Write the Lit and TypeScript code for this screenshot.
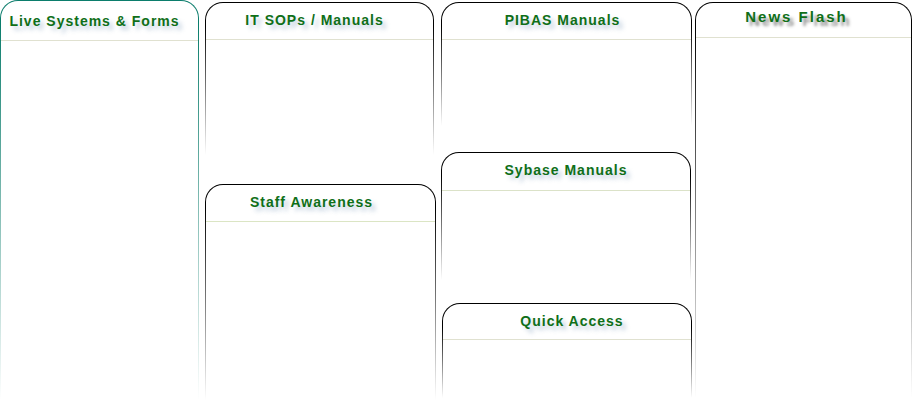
import { LitElement, html, css } from "lit";
import { customElement, property } from "lit/decorators.js";

@customElement("portal-panel")
export class PortalPanel extends LitElement {
  @property() heading = "";

  static styles = css`
    :host {
      display: block;
      --edge: #000;
      --rule: #e0e1d0;
      --shadow: 4px 4px 4px rgba(120, 150, 185, 0.45);
    }
    .panel {
      box-sizing: border-box;
      height: 100%;
      min-height: inherit;
      border: 1px solid transparent;
      border-bottom: 0;
      border-radius: 18px 18px 0 0;
      background:
        linear-gradient(#fff, #fff) padding-box,
        linear-gradient(var(--edge) 24px, #fff) border-box;
    }
    .title {
      box-sizing: border-box;
      height: var(--head, 37px);
      margin: 0;
      padding: 0 var(--pad-right, 8px) 0 var(--pad-left, 0px);
      border-bottom: 1px solid var(--rule);
      font-family: "Liberation Sans", Arial, sans-serif;
      font-size: var(--size, 14px);
      font-weight: 700;
      line-height: var(--line, 34px);
      letter-spacing: var(--tracking, 1px);
      text-align: center;
      white-space: nowrap;
      color: #0f6f18;
      text-shadow: var(--shadow);
    }
  `;

  render() {
    return html`<section class="panel">
      <h2 class="title">${this.heading}</h2>
      <slot></slot>
    </section>`;
  }
}

@customElement("app-root")
export class AppRoot extends LitElement {
  static styles = css`
    :host {
      display: block;
      background: #fff;
    }
    .board {
      display: grid;
      grid-template-columns:
        minmax(0, 202fr) minmax(0, 233fr) minmax(0, 251fr) minmax(0, 217fr);
      column-gap: 3px;
    }
    .column {
      display: flex;
      flex-direction: column;
      padding-top: 2px;
    }
    .column.first {
      padding: 0 3px 0 0;
    }
    .live {
      --edge: #0b7d6c;
      --head: 40px;
      --line: 40px;
      --pad-right: 10px;
      min-height: 400px;
    }
    .sops {
      --pad-right: 10px;
      min-height: 153px;
      margin: 0 4px 29px 0;
    }
    .staff {
      --rule: #dbe5c4;
      --pad-right: 18px;
      min-height: 216px;
      margin-right: 2px;
    }
    .pibas {
      min-height: 124px;
      margin-bottom: 26px;
    }
    .sybase {
      --rule: #dbe2c8;
      --head: 38px;
      --pad-right: 0px;
      min-height: 128px;
      margin: 0 1px 23px 0;
    }
    .quick {
      --head: 36px;
      --pad-right: 0px;
      --pad-left: 10px;
      min-height: 95px;
      margin-left: 1px;
    }
    .news {
      --shadow: 4px 4px 3px rgba(40, 40, 40, 0.5);
      --head: 35px;
      --line: 28px;
      --size: 15px;
      --tracking: 2px;
      --pad-right: 14px;
      min-height: 396px;
    }
  `;

  render() {
    return html`<main class="board">
      <div class="column first">
        <portal-panel class="live" heading="Live Systems &amp; Forms"></portal-panel>
      </div>
      <div class="column">
        <portal-panel class="sops" heading="IT SOPs / Manuals"></portal-panel>
        <portal-panel class="staff" heading="Staff Awareness"></portal-panel>
      </div>
      <div class="column">
        <portal-panel class="pibas" heading="PIBAS Manuals"></portal-panel>
        <portal-panel class="sybase" heading="Sybase Manuals"></portal-panel>
        <portal-panel class="quick" heading="Quick Access"></portal-panel>
      </div>
      <div class="column">
        <portal-panel class="news" heading="News Flash"></portal-panel>
      </div>
    </main>`;
  }
}
